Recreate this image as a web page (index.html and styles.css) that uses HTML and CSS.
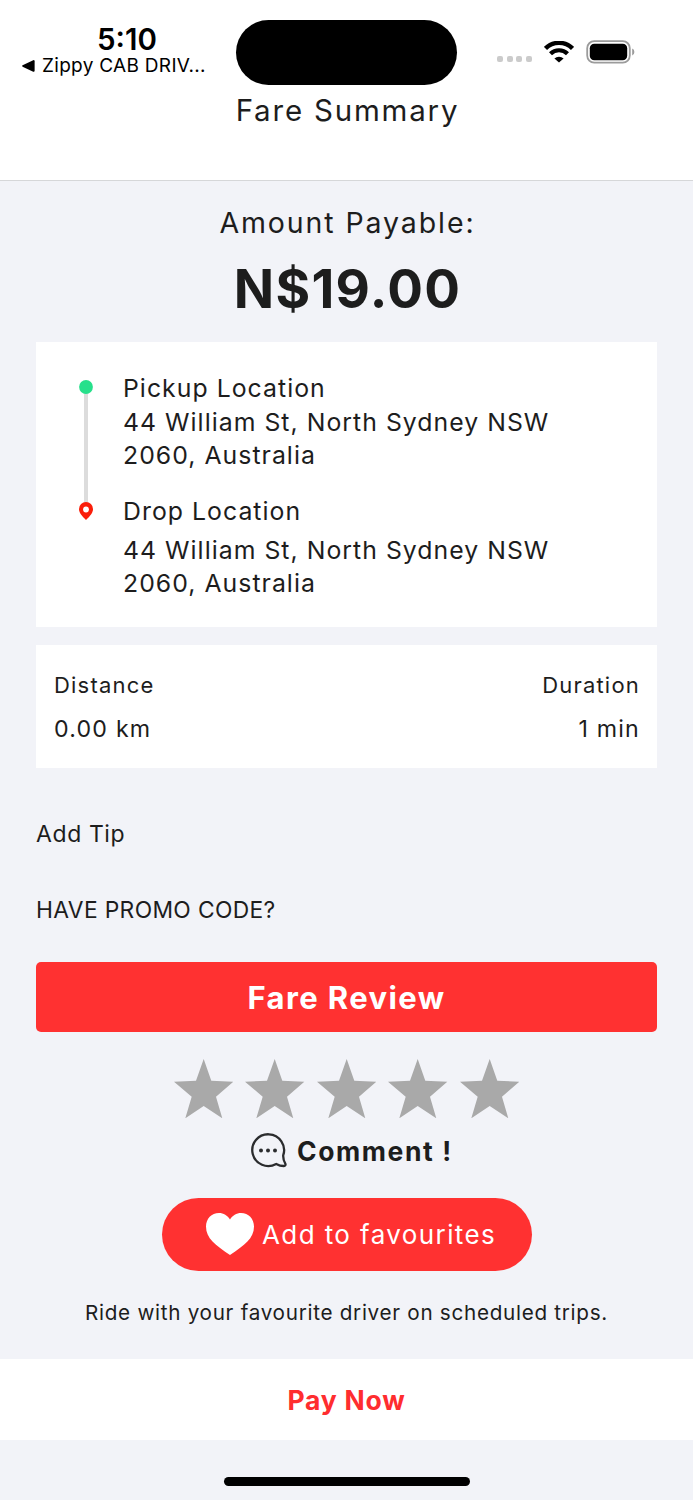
FILE: index.html
```html
<!DOCTYPE html>
<html lang="en">
<head>
<meta charset="utf-8">
<title>Fare Summary</title>
<link rel="stylesheet" href="styles.css">
</head>
<body>
<div class="screen">
  <header class="header">
    <div class="status">
      <div class="status-left">
        <div class="time"><span>5:10</span></div>
        <div class="back">
          <svg class="back-arrow" width="13" height="12" viewBox="0 0 13 12"><path d="M0.6 5.3 11.2 0.2Q12.6-.2 12.6 1.2V10.8Q12.6 12.2 11.2 11.7L.6 6.7Q-.4 6 .6 5.3Z"/></svg>
          <span class="back-label">Zippy CAB DRIV...</span>
        </div>
      </div>
      <div class="island"></div>
      <div class="status-right">
        <div class="dots"><i></i><i></i><i></i><i></i></div>
        <svg class="wifi" width="30" height="22" viewBox="0 0 30 22"><path d="M1.500 7.400A19 19 0 0 1 28.500 7.400" fill="none" stroke="#000" stroke-width="4.300"/><path d="M6.500 12.800A12 12 0 0 1 23.500 12.800" fill="none" stroke="#000" stroke-width="4.200"/><path d="M15 21.600 10.400 17.600A6.600 6.600 0 0 1 19.600 17.600Z"/></svg>
        <svg class="battery" width="49" height="24" viewBox="0 0 49 24"><rect x="1.2" y="1.2" width="42.6" height="21.4" rx="7" fill="none" stroke="#9b9b9b" stroke-width="1.8"/><rect x="3.8" y="3.8" width="37.4" height="16.4" rx="4.5"/><path d="M46.2 8.600Q48.400 9.600 48.400 12T46.200 15.400Z" fill="#9b9b9b"/></svg>
      </div>
    </div>
    <h1 class="title"><span>Fare Summary</span></h1>
  </header>

  <main class="content">
    <div class="amount-label"><span>Amount Payable:</span></div>
    <div class="amount"><span>N$19.00</span></div>

    <section class="card route">
      <svg class="track" width="14" height="140" viewBox="0 0 14 140"><rect x="5" y="12" width="4" height="112" fill="#dcdcdc"/><circle cx="7" cy="7" r="6.9" fill="#27e08b"/><path fill="#fa1e0a" fill-rule="evenodd" d="M7 122a7 7 0 0 1 7 7c0 4-3 7-7 11c-4-4-7-7-7-11a7 7 0 0 1 7-7Z"/><circle cx="7" cy="129.5" r="2.9" fill="#fff"/></svg>
      <div class="stops">
        <div class="stop">
          <div class="stop-name pickup">Pickup Location</div>
          <div class="address">44 William St, North Sydney NSW<br>2060, Australia</div>
        </div>
        <div class="stop">
          <div class="stop-name drop">Drop Location</div>
          <div class="address address-drop">44 William St, North Sydney NSW<br>2060, Australia</div>
        </div>
      </div>
    </section>

    <section class="card stats">
      <div class="stat">
        <div class="stat-name">Distance</div>
        <div class="stat-value">0.00 km</div>
      </div>
      <div class="stat stat-end">
        <div class="stat-name">Duration</div>
        <div class="stat-value">1 min</div>
      </div>
    </section>

    <div class="tip">Add Tip</div>
    <div class="promo">HAVE PROMO CODE?</div>

    <div class="review"><span>Fare Review</span></div>

    <div class="stars">
      <svg class="star" viewBox="0 0 59.4 59.4"><path d="M29.7 0 37.3 21.7 59.3 22.7 42 37.7 48.3 59.3 29.7 47 11.3 59.3 17.7 37.7 0 22.7 22 21.7Z"/></svg>
      <svg class="star" viewBox="0 0 59.4 59.4"><path d="M29.7 0 37.3 21.7 59.3 22.7 42 37.7 48.3 59.3 29.7 47 11.3 59.3 17.7 37.7 0 22.7 22 21.7Z"/></svg>
      <svg class="star" viewBox="0 0 59.4 59.4"><path d="M29.7 0 37.3 21.7 59.3 22.7 42 37.7 48.3 59.3 29.7 47 11.3 59.3 17.7 37.7 0 22.7 22 21.7Z"/></svg>
      <svg class="star" viewBox="0 0 59.4 59.4"><path d="M29.7 0 37.3 21.7 59.3 22.7 42 37.7 48.3 59.3 29.7 47 11.3 59.3 17.7 37.7 0 22.7 22 21.7Z"/></svg>
      <svg class="star" viewBox="0 0 59.4 59.4"><path d="M29.7 0 37.3 21.7 59.3 22.7 42 37.7 48.3 59.3 29.7 47 11.3 59.3 17.7 37.7 0 22.7 22 21.7Z"/></svg>
    </div>

    <div class="comment">
      <svg class="bubble" width="36" height="36" viewBox="0 0 36 36"><path d="M32.200 22.400A15.900 15.900 0 1 0 25.200 30.900Q29 33 32.800 33Q35 32.800 34.400 30.800Q32 27 32.200 22.400Z" fill="none" stroke="#2b2c2e" stroke-width="2.300" stroke-linejoin="round"/><g fill="#2b2c2e"><circle cx="10" cy="17.600" r="2"/><circle cx="17" cy="17.600" r="2"/><circle cx="24" cy="17.600" r="2"/></g></svg>
      <span class="comment-label">Comment !</span>
    </div>

    <div class="favourite">
      <svg class="heart" width="48" height="42" viewBox="0 0 48 42"><path fill="#fff" d="M24 6.500C26.500 2.500 30.500 0 35 0C42.500 0 48 5.800 48 13.500C48 25.500 38.500 32 24 42C9.500 32 0 25.500 0 13.500C0 5.800 5.500 0 13 0C17.500 0 21.500 2.500 24 6.500Z"/></svg>
      <span class="favourite-label">Add to favourites</span>
    </div>

    <p class="note"><span>Ride with your favourite driver on scheduled trips.</span></p>
  </main>

  <div class="pay"><span>Pay Now</span></div>
  <footer class="home"><div class="home-bar"></div></footer>
</div>
</body>
</html>
```
FILE: styles.css
```css
* { box-sizing: border-box; }
body { margin: 0; background: #f2f3f8; }
.screen {
  width: 693px;
  height: 1500px;
  display: flex;
  flex-direction: column;
  font-family: Inter, "Liberation Sans", sans-serif;
  color: #1d1d1d;
  overflow: hidden;
  white-space: nowrap;
}
svg { display: block; flex: none; }

.header { height: 181px; background: #fff; border-bottom: 1px solid #d6d7d9; }
.status { display: flex; height: 90px; color: #000; }
.status-left { width: 236px; padding: 23px 0 0 22px; }
.time { width: 210px; line-height: 32px; font-size: 29.5px; font-weight: 600; text-align: center; }
.back { display: flex; align-items: center; gap: 7px; line-height: 20px; margin-top: 1px; font-size: 19px; letter-spacing: 0.3px; }
.island { width: 221px; height: 64.5px; margin-top: 20px; border-radius: 33px; background: #000; }
.status-right { display: flex; align-items: flex-start; padding-left: 40px; }
.dots { display: flex; gap: 3.5px; margin-top: 56px; }
.dots i { width: 6px; height: 6px; border-radius: 2px; background: #cbcbcb; }
.wifi { margin: 40.5px 0 0 12.5px; }
.battery { margin: 39.5px 0 0 12px; }
.title { margin: 0; padding-left: 2px; text-align: center; font-size: 29.5px; line-height: 40px; font-weight: 400; letter-spacing: 1.8px; }

.content { height: 1178px; padding: 21.5px 36px 0; display: flex; flex-direction: column; }
.amount-label { padding-left: 2px; text-align: center; font-size: 28.5px; line-height: 40px; letter-spacing: 1.9px; }
.amount { margin-top: 16.5px; padding-left: 2px; text-align: center; font-size: 53px; line-height: 60px; font-weight: 700; letter-spacing: 1.3px; }
.card { background: #fff; }
.route { margin-top: 23px; height: 285px; padding: 30px 0 0 43.5px; display: flex; font-size: 24.8px; line-height: 33px; letter-spacing: 1.03px; }
.track { margin-top: 8px; margin-left: -0.5px; }
.stops { margin-left: 30px; }
.stop-name { height: 34px; }
.drop { margin-top: 23px; }
.address-drop { margin-top: 4.5px; }
.stats { margin-top: 18px; height: 123px; padding: 25px 18px; display: flex; justify-content: space-between; line-height: 30px; }
.stat-end { text-align: right; margin-right: -1px; }
.stat-name { font-size: 22px; letter-spacing: 1.2px; }
.stat-value { margin-top: 13.5px; font-size: 23.2px; letter-spacing: 1.2px; }
.tip { margin-top: 51px; font-size: 23px; line-height: 30px; letter-spacing: 0.6px; }
.promo { margin-top: 46px; font-size: 22.8px; line-height: 30px; letter-spacing: 0.35px; }
.review { margin-top: 37px; height: 70px; border-radius: 5px; background: #ff3131; color: #fff; text-align: center; font-size: 31px; line-height: 71px; font-weight: 700; letter-spacing: 1.4px; }
.stars { margin-top: 27px; display: flex; justify-content: center; gap: 12.2px; }
.star { width: 59.4px; height: 59.4px; fill: #a9a9a9; }
.comment { margin: 14.5px 0 0 214.5px; display: flex; align-items: center; gap: 10.5px; height: 36px; font-size: 26.5px; font-weight: 700; letter-spacing: 1.6px; line-height: 36px; }
.comment-label { padding-top: 1px; }
.favourite { margin: 29px 0 0 126px; width: 370px; height: 73.5px; padding-left: 43.5px; border-radius: 37px; background: #ff3131; color: #fff; display: flex; align-items: center; gap: 8.5px; font-size: 26px; letter-spacing: 1.4px; }
.heart { margin-top: -1px; }
.note { margin: 26.5px 0 0; text-align: center; font-size: 20.7px; line-height: 30px; letter-spacing: 0.7px; }
.pay { height: 81px; background: #fff; color: #ff2d2f; text-align: center; font-size: 26.5px; line-height: 82px; font-weight: 700; letter-spacing: 0.8px; }
.home { display: flex; justify-content: center; padding-top: 36.5px; }
.home-bar { width: 246px; height: 9px; border-radius: 5px; background: #000; }
```
